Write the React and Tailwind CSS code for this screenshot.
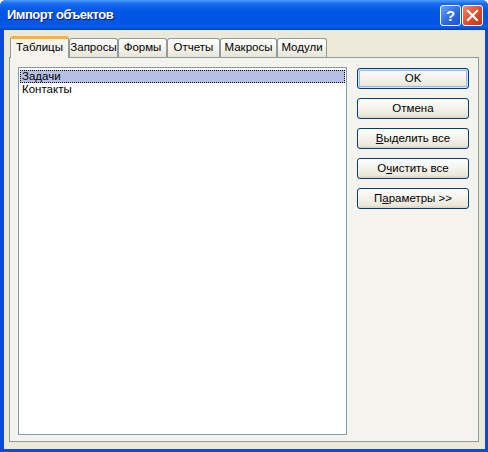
const font = { fontFamily: '"Liberation Sans", Arial, sans-serif' };

const tabs = [
  { label: "Таблицы", w: "w-[59px]", active: true },
  { label: "Запросы", w: "w-[49px]" },
  { label: "Формы", w: "w-[49px]" },
  { label: "Отчеты", w: "w-[53px]" },
  { label: "Макросы", w: "w-[57px]" },
  { label: "Модули", w: "w-[50px]" },
];

function XpButton({ children, isDefault }) {
  return (
    <button
      className={
        "h-[21px] w-[112px] rounded-[3px] border border-[#003c74] bg-[linear-gradient(to_bottom,#ffffff_0%,#f5f4ee_40%,#ebe8dc_85%,#d6d0c5_100%)] text-[11.5px] leading-none text-black " +
        (isDefault ? "shadow-[inset_0_0_0_1px_#cee7ff,inset_0_0_0_2px_#98b8ea]" : "")
      }
    >
      {children}
    </button>
  );
}

export default function App() {
  return (
    <div className="w-[488px] h-[452px] flex flex-col bg-[#0a4ade] rounded-t-[6px] overflow-hidden select-none" style={font}>
      {/* Заголовок окна */}
      <div className="h-[30px] shrink-0 flex items-center pl-[7px] pr-[5px] bg-[linear-gradient(to_bottom,#4a9cfa_0%,#1a6cf0_12%,#0058e6_35%,#0055e3_75%,#0a5ce8_90%,#003fc6_100%)]">
        <span className="text-white font-bold text-[13px] tracking-[-0.5px] [text-shadow:1px_1px_0_#0a1a7a]">
          Импорт объектов
        </span>
        <div className="ml-auto flex gap-[1px]">
          <div className="w-[21px] h-[21px] rounded-[3px] border border-white bg-[linear-gradient(135deg,#6aa0f7,#2d6ae6_55%,#1a50d0)] flex items-center justify-center text-white font-bold text-[15px] leading-none">
            ?
          </div>
          <div className="w-[21px] h-[21px] rounded-[3px] border border-white bg-[linear-gradient(135deg,#f08a6a,#e0492a_55%,#c1361c)] flex items-center justify-center">
            <svg width="13" height="13" viewBox="0 0 13 13">
              <path d="M2 2 L11 11 M11 2 L2 11" stroke="#fff" strokeWidth="2.2" strokeLinecap="square" />
            </svg>
          </div>
        </div>
      </div>

      {/* Клиентская область */}
      <div className="flex-1 mx-[4px] mb-[3px] mr-[3px] bg-[#ece9d8] pl-[5px] pt-[5px] pr-[6px] pb-[7px] flex flex-col">
        {/* Вкладки */}
        <div className="flex items-end pl-[1px] h-[22px] relative z-10">
          {tabs.map((t) =>
            t.active ? (
              <div
                key={t.label}
                className={t.w + " h-[22px] -mb-[1px] border-x border-[#919b9c] border-t-[3px] border-t-[#f7b33d] rounded-t-[3px] bg-[#f4f3ee] text-[11.5px] text-black flex items-center justify-center pb-[2px]"}
              >
                {t.label}
              </div>
            ) : (
              <div
                key={t.label}
                className={t.w + " h-[19px] border border-b-0 border-[#919b9c] rounded-t-[3px] bg-[linear-gradient(to_bottom,#ffffff,#f3f2ea_60%,#e6e3d6)] text-[11.5px] text-black flex items-center justify-center"}
              >
                {t.label}
              </div>
            )
          )}
        </div>

        {/* Панель вкладки */}
        <div className="flex-1 border border-[#919b9c] bg-[#f4f3ee] flex pl-[8px] pt-[9px] pb-[6px]">
          <div className="w-[329px] border border-[#7f9db9] bg-white pt-[2px] pl-[1px] pr-[1px]">
            <div className="h-[13px] bg-[#b6c0e6] outline outline-1 outline-dotted outline-black -outline-offset-1 text-[11.5px] leading-[13px] pl-[2px] text-black">
              Задачи
            </div>
            <div className="h-[13px] text-[11.5px] leading-[13px] pl-[2px] text-black">Контакты</div>
          </div>

          <div className="ml-[10px] pt-[1px] flex flex-col gap-[9px]">
            <XpButton isDefault>OK</XpButton>
            <XpButton>Отмена</XpButton>
            <XpButton>
              <span className="underline">В</span>ыделить все
            </XpButton>
            <XpButton>
              О<span className="underline">ч</span>истить все
            </XpButton>
            <XpButton>
              П<span className="underline">а</span>раметры &gt;&gt;
            </XpButton>
          </div>
        </div>
      </div>
    </div>
  );
}
